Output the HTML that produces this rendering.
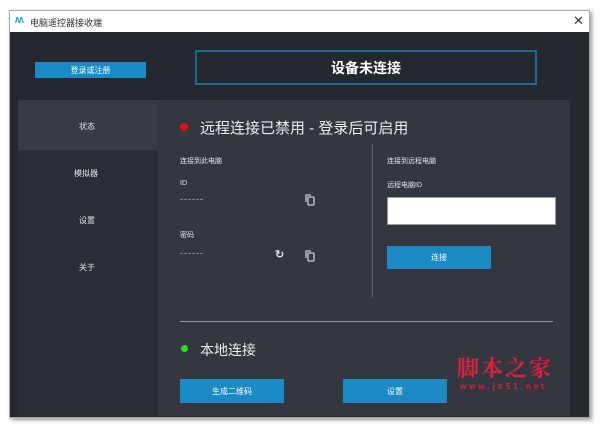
<!DOCTYPE html><html><head><meta charset="utf-8"><style>
*{margin:0;padding:0;box-sizing:border-box}
body{width:600px;height:426px;background:#fff;position:relative;overflow:hidden;font-family:"Liberation Sans","Noto Sans CJK SC",sans-serif;font-size:8px;color:#e6e6e6}
.a{position:absolute}
.btn{position:absolute;background:#1a8ac4;color:#fff;font-size:8px;display:flex;align-items:center;justify-content:center}
.dash{letter-spacing:1px;color:#bbb;font-size:9px}
</style></head><body>
<div class="a" style="left:9px;top:10px;width:581px;height:408px;border:1px solid #aaa;box-shadow:2px 2px 4px #999;background:#25272e"></div>
<div class="a" style="left:10px;top:11px;width:579px;height:21px;background:#fff;color:#333;font-size:9px">
<span class="a" style="left:5px;top:3px;color:#1aa0e0;font-weight:bold;font-size:11px">ʍ</span>
<span class="a" style="left:20px;top:5px">电脑遥控器接收端</span>
<span class="a" style="left:563px;top:2px;font-size:13px;color:#333">✕</span></div>
<div class="btn" style="left:35px;top:62px;width:111px;height:16px">登录或注册</div>
<div class="a" style="left:195px;top:50px;width:342px;height:35px;border:2px solid #1a6a92;color:#fff;font-size:14px;font-weight:bold;display:flex;align-items:center;justify-content:center">设备未连接</div>
<div class="a" style="left:18px;top:100px;width:140px;height:316px;background:#2b2d35"></div>
<div class="a" style="left:18px;top:100px;width:140px;height:50px;background:#383a43"></div>
<div class="a" style="left:158px;top:100px;width:412px;height:316px;background:#33363f"></div>
<div class="a" style="left:79px;top:121px">状态</div>
<div class="a" style="left:74px;top:168px">模拟器</div>
<div class="a" style="left:79px;top:215px">设置</div>
<div class="a" style="left:79px;top:262px">关于</div>
<div class="a" style="left:180px;top:123px;width:8px;height:8px;border-radius:50%;background:#e01010"></div>
<div class="a" style="left:200px;top:117px;font-size:15px;color:#eee">远程连接已禁用 - 登录后可启用</div>
<div class="a" style="left:180px;top:156px;font-size:7px">连接到此电脑</div>
<div class="a" style="left:180px;top:180px;font-size:7px">ID</div>
<div class="a dash" style="left:180px;top:194px">------</div>
<div class="a" style="left:180px;top:230px;font-size:7px">密码</div>
<div class="a dash" style="left:180px;top:248px">------</div>
<svg class="a" style="left:305px;top:194px" width="10" height="12"><path d="M1 8V1h5" fill="none" stroke="#ccc" stroke-width="1.3"/><rect x="3" y="3" width="6" height="8" rx="1" fill="none" stroke="#ccc" stroke-width="1.3"/></svg>
<svg class="a" style="left:305px;top:250px" width="10" height="12"><path d="M1 8V1h5" fill="none" stroke="#ccc" stroke-width="1.3"/><rect x="3" y="3" width="6" height="8" rx="1" fill="none" stroke="#ccc" stroke-width="1.3"/></svg>
<div class="a" style="left:275px;top:248px;font-size:11px;color:#ddd;font-weight:bold">↻</div>
<div class="a" style="left:372px;top:144px;width:1px;height:153px;background:#666"></div>
<div class="a" style="left:387px;top:156px;font-size:7px">连接到远程电脑</div>
<div class="a" style="left:387px;top:180px;font-size:7px">远程电脑ID</div>
<div class="a" style="left:387px;top:197px;width:169px;height:28px;background:#fff;border:1px solid #999"></div>
<div class="btn" style="left:387px;top:246px;width:104px;height:23px">连接</div>
<div class="a" style="left:180px;top:321px;width:373px;height:1px;background:#999"></div>
<div class="a" style="left:181px;top:345px;width:7px;height:7px;border-radius:50%;background:#22e022"></div>
<div class="a" style="left:200px;top:340px;font-size:14px;color:#eee">本地连接</div>
<div class="btn" style="left:180px;top:379px;width:104px;height:24px">生成二维码</div>
<div class="btn" style="left:343px;top:379px;width:104px;height:24px">设置</div>
<div class="a" style="left:457px;top:352px;font-size:22px;color:#e0203a;font-family:'Noto Serif CJK SC',serif;font-weight:bold;letter-spacing:2px">脚本之家</div>
<div class="a" style="left:460px;top:382px;font-size:8px;color:#e0203a;letter-spacing:3px;font-weight:bold">www.jb51.net</div>
</body></html>
